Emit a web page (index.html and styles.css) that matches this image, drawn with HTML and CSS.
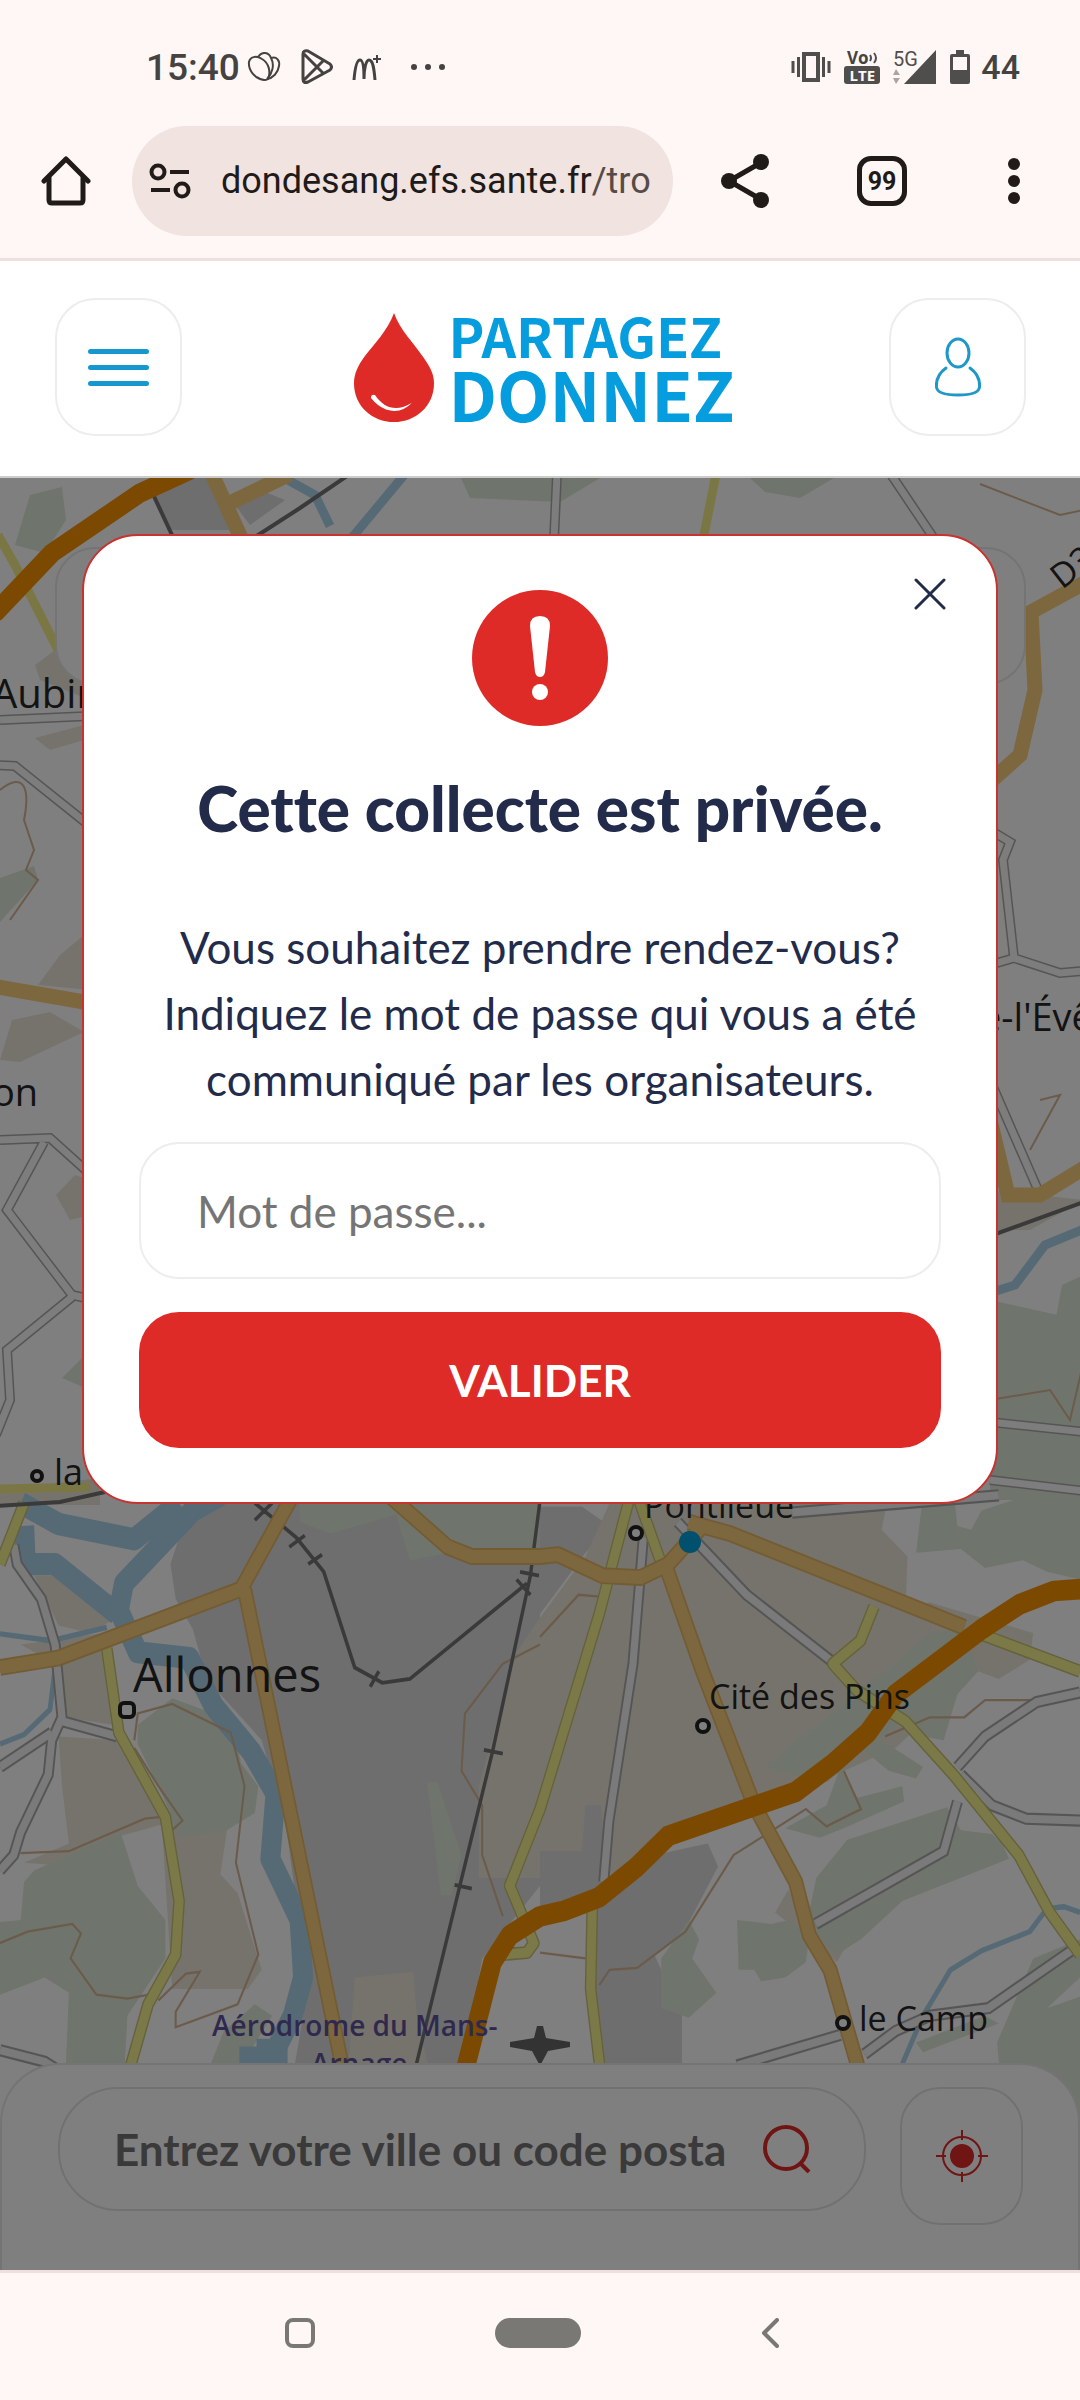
FILE: index.html
```html
<!DOCTYPE html>
<html lang="fr">
<head>
<meta charset="utf-8">
<meta name="viewport" content="width=device-width, initial-scale=1">
<title>Partagez Donnez</title>
<link rel="stylesheet" href="styles.css">
</head>
<body>
<header class="browser">
  <div class="status">
    <span class="clock">15:40</span>
    <svg class="st-flower" width="34" height="30" viewBox="0 0 34 30" fill="none" stroke="#454342" stroke-width="2"><path d="M17 28C8 27 1 18 2 10C3 5 9 3 15 7C22 11 24 20 21 27C18 29 14 28 10 25"/><path d="M11 5C15-1 22 0 24 6C28 13 25 22 20 27"/><path d="M24 6C30 4 33 9 32 14C31 21 26 26 20 27"/></svg>
    <svg class="st-play" width="34" height="36" viewBox="0 0 34 36" fill="none" stroke="#454342" stroke-width="3" stroke-linejoin="round"><path d="M3 5Q3 1 8 2L30 15Q33 18 30 21L8 33Q3 35 3 30ZM4 5L24 25M4 31L24 11"/></svg>
    <svg class="st-m" width="30" height="28" viewBox="0 0 30 28" fill="none" stroke="#454342" stroke-width="3"><path d="M2 27C3 15 5 7 8 7C11 7 12 16 12 26M12 26C12 16 14 7 17 7C21 7 22 15 23 27"/><path d="M25 2V10M21 6H29" stroke-width="2"/></svg>
    <svg width="36" height="8" viewBox="0 0 36 8" fill="#454342"><circle cx="4" cy="4" r="3"/><circle cx="18" cy="4" r="3"/><circle cx="32" cy="4" r="3"/></svg>
    <div class="status-right">
      <svg width="40" height="32" viewBox="0 0 40 32" fill="none" stroke="#504e4c" stroke-width="4"><rect x="13" y="3" width="14" height="26"/><path d="M2 10V22M7.500 6V26M32.500 6V26M38 10V22" stroke-width="3"/></svg>
      <div class="volte"><span class="vo">Vo<svg width="9" height="12" viewBox="0 0 9 12" fill="none" stroke="#504e4c" stroke-width="2"><path d="M1 3Q3 6 1 9M5 1Q9 6 5 11"/></svg></span><span class="lte">LTE</span></div>
      <svg class="signal" width="44" height="36" viewBox="0 0 44 36" fill="#504e4c"><path d="M43 1V35H11Z"/><path d="M3 20L7 26H0ZM3 35L7 29H0Z" fill="#aaa5a2"/><text x="0" y="17" font-family="Roboto, sans-serif" font-size="20">5G</text></svg>
      <svg width="20" height="34" viewBox="0 0 20 34" fill="#504e4c"><path d="M6 0H14V4H18Q20 4 20 6V32Q20 34 18 34H2Q0 34 0 32V6Q0 4 2 4H6Z"/><path d="M3 7H17V20H3Z" fill="#fff7f5"/></svg>
      <span class="level">44</span>
    </div>
  </div>
  <div class="toolbar">
    <button class="plain" aria-label="Accueil"><svg width="50" height="50" viewBox="0 0 50 50" fill="none" stroke="#201a18" stroke-width="5" stroke-linecap="round" stroke-linejoin="round"><path d="M3 25L25 3L47 25"/><path d="M8 22V44Q8 47 11 47H39Q42 47 42 44V22"/></svg></button>
    <div class="url">
      <svg width="42" height="36" viewBox="0 0 42 36" fill="none" stroke="#201a18" stroke-width="4"><circle cx="9" cy="9" r="6.500"/><circle cx="33" cy="27" r="6.500"/><path d="M21 9H40M2 27H21"/></svg>
      <span class="address">dondesang.efs.sante.fr<span class="path">/tro</span></span>
    </div>
    <button class="plain share" aria-label="Partager"><svg width="50" height="56" viewBox="0 0 50 56" fill="#201a18"><path d="M42 9L9 28L42 47" fill="none" stroke="#201a18" stroke-width="5"/><circle cx="41" cy="9" r="8"/><circle cx="9" cy="28" r="8"/><circle cx="41" cy="47" r="8"/></svg></button>
    <button class="tabs">99</button>
    <button class="plain more" aria-label="Menu"><svg width="12" height="46" viewBox="0 0 12 46" fill="#201a18"><circle cx="6" cy="6" r="6"/><circle cx="6" cy="23" r="6"/><circle cx="6" cy="40" r="6"/></svg></button>
  </div>
</header>

<div class="site">
  <button class="square menu" aria-label="Ouvrir le menu"><span></span><span></span><span></span></button>
  <a class="logo" href="#">
    <svg width="80" height="109" viewBox="0 0 80 113" preserveAspectRatio="none"><path d="M40 0C46 18 60 31 70 47C76 56 80 63 80 73C80 96 62 113 40 113C18 113 0 96 0 73C0 63 4 55 10 46C20 32 34 18 40 0Z" fill="#de2b27"/><path d="M17 88Q17 84 21 85C30 99 43 103 58 93Q47 105 32 100Q23 96 17 88Z" fill="#fff"/></svg>
    <span class="brand"><span class="line1">PARTAGEZ</span><span class="line2">DONNEZ</span></span>
  </a>
  <button class="square user" aria-label="Mon compte"><svg width="46" height="60" viewBox="0 0 46 60" fill="none" stroke="#1f97c8" stroke-width="3" stroke-linecap="round"><ellipse cx="23" cy="16" rx="11" ry="14"/><path d="M11 31C4 36 1 43 1.500 50Q2 58 23 58Q44 58 44.500 50C45 43 42 36 35 31"/></svg></button>
</div>

<main class="stage">
  <svg class="map" viewBox="0 478 1080 1792" preserveAspectRatio="xMidYMin slice" aria-hidden="true">
    <defs>
      <path id="w1" d="M40 170L50 220L120 310L160 430L180 620L150 680L140 770L60 920L40 980L0 1020M180 630L340 670M150 660L0 750M0 1490L130 1520L200 1560M1968 110L2168 300L2438 490M1868 150L1838 480L1768 890L1753 1050M2368 1160L2740 970L2780 840M2780 750L2860 670L3010 580L3136 555M2790 770L2880 850L2980 885L3136 890M3110 1230L2870 1380L2700 1400L2600 1440L2510 1500M2140 1530L2440 1450M2300 85L2900 40"/>
      <path id="w2" d="M0 720L90 716M-5 765L15 766L90 826M0 1140L50 1138L90 1174M44 1142L7 1210L72 1295L90 1299M72 1297L7 1350L10 1400L-4 1435M557 474L554 540M888 470L935 540M990 830L1010 842L1003 860L1014 958L1060 973L1084 971M990 965L1014 958M990 1080L1038 1190M990 1422L1084 1432M990 1480L1084 1491"/>
      <path id="y" d="M70 60L0 220M310 440L345 660L480 880L520 1100L510 1240L430 1370L370 1560M1830 40L1740 350L1568 860L1480 1060L1550 1210L1530 1235L1460 1240M1850 40L1925 230M2538 330L2498 420L2418 480L2488 550L2628 630L2768 770L2958 980L3048 1130L3136 1240M2840 400L3136 500M1720 1100L1715 1330L1745 1560"/>
      <path id="o" d="M0 490L170 465L700 285L850 40M710 285L1000 1560M1130 40L1300 175L1370 200H1568L1620 195L1750 250L1860 255L1940 220L2040 120M2000 110L2120 140L2800 385M1935 230L2040 500L2190 850L2310 1050L2350 1190L2410 1280L2500 1560"/>
    </defs>
    <rect y="478" width="1080" height="1792" fill="#fefefe"/>
    <path d="M15 545L30 495L62 487L66 520L45 553ZM461 478H600L560 502L470 498ZM750 478H834L800 498L765 492ZM0 878L34 866L38 880L0 922ZM62 1378L90 1350V1390ZM990 1300L1080 1320V1500H990ZM1062 1285L1084 1275V1350H1050Z" fill="#dfe9d8"/>
    <path d="M38 985L60 955L90 930V990ZM0 1060L12 1020L50 1012L84 1032L20 1062ZM56 1195L75 1175L90 1180V1215L70 1220ZM35 665L55 650L90 690V700L40 680ZM35 738L84 725V740L50 750ZM0 1490L100 1478V1505H0ZM990 1190L1084 1200L1030 1230H990Z" fill="#ece7d8"/>
    <path d="M155 496L190 478H215L235 530H170ZM235 505L260 490L285 500L250 525Z" fill="#dcdcdc"/>
    <g transform="translate(0 1480) scale(.3444 .3827)">
      <path fill="#dcdcdc" d="M640 40L520 150L495 220L510 310L560 390L600 520L760 680L830 900L860 1100L900 1200L880 1400L850 1560H1340L1400 1250L1568 1060V40ZM1568 70L1690 70L1770 120L1700 190L1568 350Z"/>
      <path fill="#ece7d8" d="M1568 360L1700 200L1780 40H2580L2560 130L2635 200L2630 330L2700 320L3000 400L2990 470L2900 520L2840 500L2600 700L2400 780L2200 830L1940 930L1850 1000L1700 1060L1568 1040H1390L1390 800L1500 450ZM60 430L300 400L330 640L190 620L180 490ZM170 670L340 680L480 880L530 870L560 920L660 910L640 1030L690 1080L760 1280L720 1330H500L470 900L350 930V1020L70 1000L200 950L180 800ZM100 250H180L320 370L260 400L170 380ZM1030 1300L1200 1285L1210 1400L1250 1560H1010ZM2250 1130L2290 1070L2340 1180L2480 1180L2430 1260L2380 1220Z"/>
      <path fill="#dcdcdc" d="M1568 970H1690L1700 850H1745L1760 1040L1900 980L2055 950L2085 1010L1980 1190L1900 1240L1980 1400V1560H1750L1710 1100L1568 1120Z"/>
      <path fill="#fefefe" d="M1440 1300L1568 1140L1710 1100L1700 1300L1730 1560H1380Z"/>
      <path fill="#dfe9d8" d="M870 40H1568V180H1370L1190 210L1150 90L960 140L870 110ZM1240 790H1270L1340 980L1310 1085H1280ZM2680 40H2770L2780 120L2820 130L2850 80L2950 50L3136 40V260L3040 240L2970 210L2860 230L2790 180L2660 190ZM2220 750L2400 620L2600 480L2700 400L2800 390L2840 500L2780 560L2740 680L2680 670L2640 610L2400 790ZM2500 700L2560 680L2680 750L2660 780L2580 760ZM2280 910L2400 850L2440 750L2490 830L2620 800L2625 840L2450 910L2380 935ZM2370 1040L2460 940L2750 855L2790 915L2880 925L2910 950L2930 990L2620 1100L2500 1200L2430 1240L2340 1170ZM2140 1150L2240 1160L2290 1150L2350 1190L2340 1260L2280 1300L2210 1310L2190 1280L2145 1280ZM1920 1250L2000 1150L2030 1200L2010 1250L2080 1340L2000 1405L1920 1380ZM3000 1250L3136 1200V1300L3040 1380L3136 1350V1700H2920L2895 1470ZM2660 1470L2860 1400L2900 1420L2680 1495ZM400 640L500 570L620 610L680 660L700 740L750 800L740 870L650 920L520 930L480 840L400 690ZM0 1155L60 1150L70 1050L100 1020L350 920L400 1060L480 1150V1250L370 1400L360 1560H190L200 1340L130 1300L0 1345ZM610 1530L650 1440L740 1370L790 1400L680 1560Z"/>
      <g fill="none" stroke="#acd4ea" stroke-linejoin="round">
        <path d="M60 60L170 115L390 155L520 60M70 120L75 220L160 220L340 350M640 40L560 80L360 270L345 340L400 450L550 465L620 590L730 710L800 820L785 990L870 1150L880 1300L850 1400L760 1560" stroke-width="58"/>
        <path d="M740 1570V1480M790 1570V1460" stroke-width="90"/>
        <path d="M0 402L150 420L240 400L310 385M160 490L145 600L70 665L0 690M2618 1530L2680 1400L2760 1280L2850 1230L2990 1180L3040 1120L3090 1115L3136 1130" stroke-width="14"/>
      </g>
      <path fill="none" stroke="#d6b795" stroke-width="6" d="M60 975L200 970L420 885L470 880M0 1210L80 1180L210 1160L235 1185L205 1250L280 1345L370 1355L460 1340M390 680L400 610L500 585L670 660L710 800L685 1000L750 1240L690 1370L510 1430V1390L580 1285L540 1290L460 1360M390 700L460 800L530 890L500 915M1568 430L1460 480L1350 610L1340 760L1400 850L1400 980L1460 1140M1568 410L1680 300L1740 305M1740 1320L1770 1280L1850 1275L1990 1180L2130 980L2340 860L2400 905L2500 860L2450 760M2570 670L2700 620L2800 620L2860 575H3000M1568 1235L1700 1250"/>
      <use href="#w1" fill="none" stroke="#aaa" stroke-width="32"/>
      <use href="#w1" fill="none" stroke="#f4f4f4" stroke-width="21"/>
      <path fill="none" stroke="#747474" stroke-width="10" d="M740 60L860 150L940 240L1030 490L1110 530L1190 520L1530 270M1570 40L1540 250L1430 710L1200 1560M740 105L790 60M840 175L885 145M895 220L935 195M1075 540L1100 500M1405 705L1460 715M1320 1058L1370 1068M1500 260L1540 300M1510 240L1565 250"/>
      <g fill="none" stroke-linejoin="round">
        <use href="#y" stroke="#c9c478" stroke-width="34"/>
        <use href="#y" stroke="#f8f392" stroke-width="26"/>
        <use href="#o" stroke="#e6b866" stroke-width="44"/>
        <use href="#o" stroke="#fbcf7c" stroke-width="34"/>
        <path d="M3140 285L3060 290L2960 325L2850 390L2600 560L2520 660L2420 740L2310 815L1940 930L1850 1010L1740 1090L1640 1125L1568 1140L1480 1190L1430 1260L1345 1560" stroke="#f89200" stroke-width="54"/>
      </g>
    </g>
    <g fill="none">
      <use href="#w2" stroke="#aaa" stroke-width="10"/>
      <use href="#w2" stroke="#fafafa" stroke-width="7"/>
      <path d="M0 790C25 770 30 790 24 820L34 850L26 870L38 880L10 920M1040 1100L1060 1095L1030 1150M980 484L1060 515L1084 510M990 1400L1050 1390L1070 1420L1084 1360" stroke="#d6b795" stroke-width="2"/>
      <path d="M288 480L315 495L330 526M350 540L405 474M990 1293L1015 1285L1045 1245L1084 1229" stroke="#acd4ea" stroke-width="9"/>
      <path d="M152 492L172 535M255 537L300 508L350 474M-4 1506L60 1502L105 1492M990 1236L1084 1202" stroke="#747474" stroke-width="4"/>
      <path d="M-2 535L15 565L58 650M716 474L703 540M0 1489L90 1487" stroke="#f4ee8a" stroke-width="9"/>
      <path d="M210 470L242 540M232 502L290 474M-2 987L90 1003M1084 583L1031 612L1035 690L1020 755L990 782M990 1120L1008 1195H1040L1084 1168" stroke="#fbcf7c" stroke-width="15"/>
      <path d="M-6 614L52 553L140 493L190 470" stroke="#f89200" stroke-width="19"/>
    </g>
    <g class="names">
      <text x="-8" y="708" font-size="40">Aubin</text>
      <text x="-8" y="1106" font-size="38">on</text>
      <text x="54" y="1485" font-size="36">la</text>
      <text x="980" y="1031" font-size="38">é-l'Évêque</text>
      <text x="133" y="1692" font-size="47">Allonnes</text>
      <text x="644" y="1518" font-size="34">Pontlieue</text>
      <text x="709" y="1709" font-size="34">Cité des Pins</text>
      <text x="859" y="2031" font-size="34">le Camp</text>
      <text transform="translate(1062 590) rotate(-38)" font-size="34">D323</text>
      <text class="air" x="212" y="2036" font-size="28">Aérodrome du Mans-</text>
      <text class="air" x="311" y="2074" font-size="28">Arnage</text>
    </g>
    <g fill="#fefefe" stroke="#222" stroke-width="4">
      <rect x="120" y="1703" width="14" height="14" rx="4"/><circle cx="37" cy="1476" r="5"/><circle cx="636" cy="1533" r="6"/><circle cx="703" cy="1726" r="6"/><circle cx="843" cy="2023" r="6"/>
    </g>
    <path d="M537 2026H543L546 2038L570 2042V2047L548 2051L541 2064H539L532 2051L510 2047V2042L534 2038Z" fill="#666"/>
    <circle cx="690" cy="1542" r="11" fill="#00a0dc"/>
  </svg>
  <div class="results"></div>
  <form class="search">
    <div class="field">
      <input type="text" aria-label="Ville ou code postal" placeholder="Entrez votre ville ou code postal">
      <button type="submit" class="plain" aria-label="Rechercher"><svg width="48" height="48" viewBox="0 0 48 48" fill="none" stroke="#de2b27" stroke-width="4"><circle cx="23" cy="23" r="21"/><path d="M37 38L46 47"/></svg></button>
    </div>
    <button type="button" class="locate" aria-label="Me localiser"><svg width="52" height="52" viewBox="0 0 52 52" fill="none" stroke="#de2b27" stroke-width="2"><circle cx="26" cy="26" r="19"/><circle cx="26" cy="26" r="11" fill="#de2b27"/><path d="M26 0V10M26 42V52M0 26H10M42 26H52"/></svg></button>
  </form>
  <div class="backdrop">
    <form class="modal" role="dialog" aria-labelledby="modal-title">
      <button type="button" class="plain close" aria-label="Fermer"><svg width="32" height="32" viewBox="0 0 32 32" fill="none" stroke="#232b4b" stroke-width="3" stroke-linecap="round"><path d="M2 2L30 30M30 2L2 30"/></svg></button>
      <svg class="alert" width="136" height="136" viewBox="0 0 136 136"><circle cx="68" cy="68" r="68" fill="#de2b27"/><path d="M58 36Q58 26 68 26Q78 26 78 36L73 82Q72 87 68 87Q64 87 63 82Z" fill="#fff"/><circle cx="68" cy="102" r="8" fill="#fff"/></svg>
      <h1 id="modal-title">Cette collecte est privée.</h1>
      <p>Vous souhaitez prendre rendez-vous? Indiquez le mot de passe qui vous a été communiqué par les organisateurs.</p>
      <input type="password" aria-label="Mot de passe" placeholder="Mot de passe...">
      <button type="submit" class="submit">VALIDER</button>
    </form>
  </div>
</main>

<nav class="system">
  <button class="plain" aria-label="Applications récentes"><svg width="30" height="30" viewBox="0 0 30 30" fill="none" stroke="#7a7875" stroke-width="4"><rect x="2" y="2" width="26" height="26" rx="6"/></svg></button>
  <button class="home-pill" aria-label="Écran d'accueil"></button>
  <button class="plain" aria-label="Retour"><svg width="18" height="30" viewBox="0 0 18 30" fill="none" stroke="#7a7875" stroke-width="4" stroke-linecap="round" stroke-linejoin="round"><path d="M16 2L3 15L16 28"/></svg></button>
</nav>
</body>
</html>
```
FILE: styles.css
```css
* { box-sizing: border-box; }

body {
  margin: 0;
  min-height: 100vh;
  display: flex;
  flex-direction: column;
  background: #fff;
  font-family: Lato, "Open Sans", sans-serif;
  color: #232b4b;
}

button { font: inherit; cursor: pointer; }
svg { display: block; flex: none; }

.plain {
  flex: none;
  padding: 0;
  border: 0;
  background: none;
}

/* Browser chrome */
.browser {
  background: #fff7f5;
  border-bottom: 3px solid #efdfdd;
  padding-bottom: 22px;
  font-family: Roboto, sans-serif;
}

.status {
  display: flex;
  align-items: center;
  height: 126px;
  padding: 8px 60px 0 146px;
  color: #454342;
}

.clock { font-size: 37px; font-weight: 500; margin-right: 7px; }
.st-flower { margin-right: 19px; }
.st-play { margin-right: 18px; }
.st-m { margin-right: 28px; }

.status-right {
  display: flex;
  align-items: center;
  gap: 13px;
  margin-left: auto;
}

.volte {
  display: flex;
  flex-direction: column;
  align-items: center;
  width: 36px;
  font-family: "Open Sans", sans-serif;
  font-weight: 700;
  line-height: 16px;
}

.vo { display: flex; align-items: center; font-size: 17px; }

.lte {
  width: 36px;
  border-radius: 3px;
  background: #504e4c;
  color: #fff7f5;
  font-size: 15px;
  line-height: 18px;
  text-align: center;
}

.signal { overflow: visible; }

.level { font-size: 34px; font-weight: 500; margin-left: -2px; }

.toolbar {
  display: flex;
  align-items: center;
  padding: 0 60px 0 41px;
}

.url {
  flex: 1;
  min-width: 0;
  display: flex;
  align-items: center;
  gap: 30px;
  height: 110px;
  margin-left: 41px;
  padding: 0 21px 0 17px;
  border-radius: 55px;
  background: #f0e3e0;
}

.address {
  flex: 1;
  overflow: hidden;
  white-space: nowrap;
  font-size: 36px;
  line-height: 48px;
  color: #201a18;
}

.path { color: #574a47; }
.share { margin-left: 47px; }

.tabs {
  width: 50px;
  height: 50px;
  margin-left: 87px;
  padding: 0;
  border: 5px solid #201a18;
  border-radius: 14px;
  background: none;
  color: #201a18;
  font-size: 25px;
  font-weight: 700;
}

.more { margin-left: 101px; }

/* Site header */
.site {
  display: grid;
  grid-template-columns: 1fr auto 1fr;
  align-items: center;
  padding: 37px 54px 40px 55px;
  border-bottom: 2px solid #ccc;
}

.square {
  display: flex;
  align-items: center;
  justify-content: center;
  height: 138px;
  padding: 0;
  border: 2px solid #ededed;
  border-radius: 40px;
  background: #fff;
}

.menu { flex-direction: column; gap: 11px; width: 127px; }
.menu span { width: 61px; height: 5px; border-radius: 3px; background: #1698cf; }
.user { width: 137px; justify-self: end; }

.logo { display: flex; align-items: center; gap: 15px; text-decoration: none; }

.brand {
  display: flex;
  flex-direction: column;
  width: 279px;
  color: #069ddf;
  font-family: "Noto Sans CJK JP", sans-serif;
  font-weight: 700;
}

.line1 { font-size: 54px; line-height: 52px; }
.line2 { font-size: 68px; line-height: 64px; }

/* Map stage */
.stage {
  position: relative;
  flex: 1;
  display: flex;
  flex-direction: column;
  overflow: hidden;
}

.map { position: absolute; inset: 0; width: 100%; height: 100%; }

.names {
  font-family: "Open Sans", "Noto Sans", sans-serif;
  font-weight: 500;
  fill: #262626;
}

.air { fill: #5e549a; font-weight: 600; }

.results {
  position: relative;
  height: 138px;
  margin: 69px 54px 0 55px;
  border: 2px solid #e8e8e8;
  border-radius: 40px;
  background: #fff;
}

.search {
  position: relative;
  display: flex;
  align-items: flex-start;
  gap: 34px;
  margin-top: auto;
  padding: 22px 55px 45px 56px;
  border: 2px solid #e8e8e8;
  border-bottom: 0;
  border-radius: 60px 60px 0 0;
  background: #fff;
}

.field {
  flex: 1;
  display: flex;
  align-items: center;
  gap: 37px;
  height: 124px;
  padding: 0 53px 0 54px;
  border: 2px solid #e2e2e2;
  border-radius: 60px;
}

.field input {
  flex: 1;
  min-width: 0;
  padding: 0;
  border: 0;
  background: none;
  font: 700 44px/60px Lato, sans-serif;
}

input::placeholder { color: #757575; opacity: 1; }

.locate {
  display: flex;
  align-items: center;
  justify-content: center;
  width: 123px;
  height: 138px;
  padding: 0;
  border: 2px solid #e2e2e2;
  border-radius: 40px;
  background: none;
}

.backdrop {
  position: absolute;
  inset: 0;
  padding: 56px 82px;
  background: rgba(0, 0, 0, .5);
}

.modal {
  position: relative;
  display: flex;
  flex-direction: column;
  align-items: center;
  padding: 54px 55px;
  border: 2px solid #c8332f;
  border-radius: 56px;
  background: #fff;
  font-variant-ligatures: none;
}

.close { position: absolute; top: 42px; right: 50px; }

.modal h1 {
  margin: 46px 0 70px;
  font-size: 62px;
  font-weight: 900;
  line-height: 72px;
}

.modal p {
  margin: 0;
  max-width: 800px;
  font-size: 44px;
  line-height: 66px;
  text-align: center;
}

.modal input {
  width: 100%;
  height: 137px;
  margin: 30px 0 33px;
  padding: 0 56px;
  border: 2px solid #ededed;
  border-radius: 40px;
  background: #fff;
  font: 400 44px/60px Lato, sans-serif;
}

.submit {
  width: 100%;
  height: 136px;
  padding: 0;
  border: 0;
  border-radius: 40px;
  background: #de2b27;
  color: #fff;
  font-size: 44px;
  font-weight: 700;
}

/* System navigation */
.system {
  display: flex;
  align-items: center;
  justify-content: center;
  gap: 180px;
  height: 130px;
  padding: 0 16px 8px 0;
  border-top: 3px solid #efdfdd;
  background: #fff7f5;
}

.home-pill {
  width: 86px;
  height: 30px;
  padding: 0;
  border: 0;
  border-radius: 15px;
  background: #7a7875;
}
```
